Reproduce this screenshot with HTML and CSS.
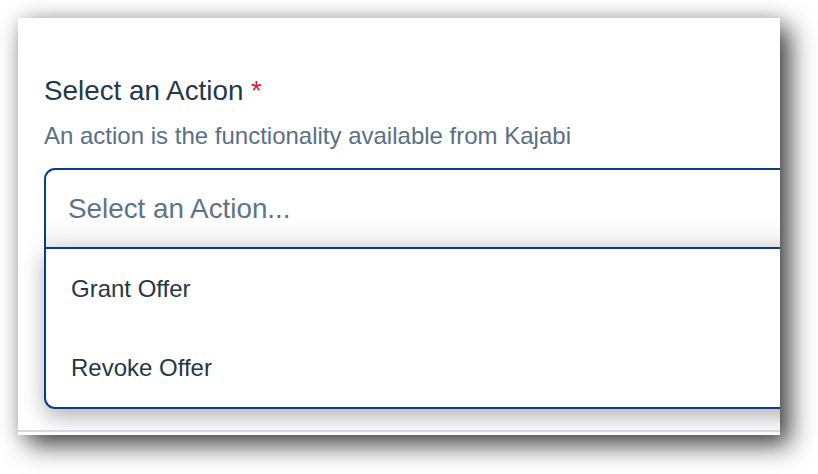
FILE: index.html
```html
<!DOCTYPE html>
<html lang="en">
<head>
<meta charset="utf-8">
<title>Select an Action</title>
<link rel="stylesheet" href="styles.css">
</head>
<body>
<div class="card">
  <div class="label">Select an Action <span class="req">*</span></div>
  <div class="desc">An action is the functionality available from Kajabi</div>
  <div class="select">
    <div class="control">Select an Action...</div>
    <div class="menu">
      <div class="option">Grant Offer</div>
      <div class="option">Revoke Offer</div>
    </div>
  </div>
  <div class="footer"></div>
</div>
</body>
</html>
```

FILE: styles.css
```css
html, body {
  margin: 0;
  padding: 0;
  background: #ffffff;
}
body {
  font-family: "Liberation Sans", Arial, sans-serif;
  width: 818px;
  height: 474px;
  overflow: hidden;
}
.card {
  margin: 18px 0 0 18px;
  width: 762px;
  background: #ffffff;
  box-shadow: 10px 10px 24px rgba(0, 0, 0, 0.72), 0 0 18px rgba(0, 0, 0, 0.16);
  overflow: hidden;
  padding: 57px 0 0 26px;
  box-sizing: border-box;
}
.label {
  font-size: 27.8px;
  line-height: 32px;
  color: #263746;
}
.req {
  color: #e1193a;
}
.desc {
  margin-top: 15px;
  font-size: 24px;
  line-height: 28px;
  color: #5a7085;
}
.select {
  margin-top: 18px;
  width: 800px;
}
.control {
  height: 77px;
  border: 2px solid #073f8c;
  border-bottom: none;
  border-radius: 11px 11px 0 0;
  display: flex;
  align-items: center;
  padding-left: 22px;
  font-size: 27.8px;
  line-height: 32px;
  color: #5d7388;
  background: linear-gradient(to bottom, #ffffff 0%, #ffffff 65%, #f1f1f1 100%);
}
.menu {
  border: 2px solid #073f8c;
  border-radius: 0 0 11px 11px;
  background: #ffffff;
  box-shadow: 0 8px 22px rgba(0, 0, 0, 0.3);
}
.option {
  height: 79px;
  display: flex;
  align-items: center;
  padding-left: 25px;
  font-size: 24px;
  line-height: 28px;
  color: #263746;
}
.footer {
  margin-top: 21px;
  margin-left: -26px;
  height: 3px;
  border-top: 2px solid #d3d9de;
}
```
